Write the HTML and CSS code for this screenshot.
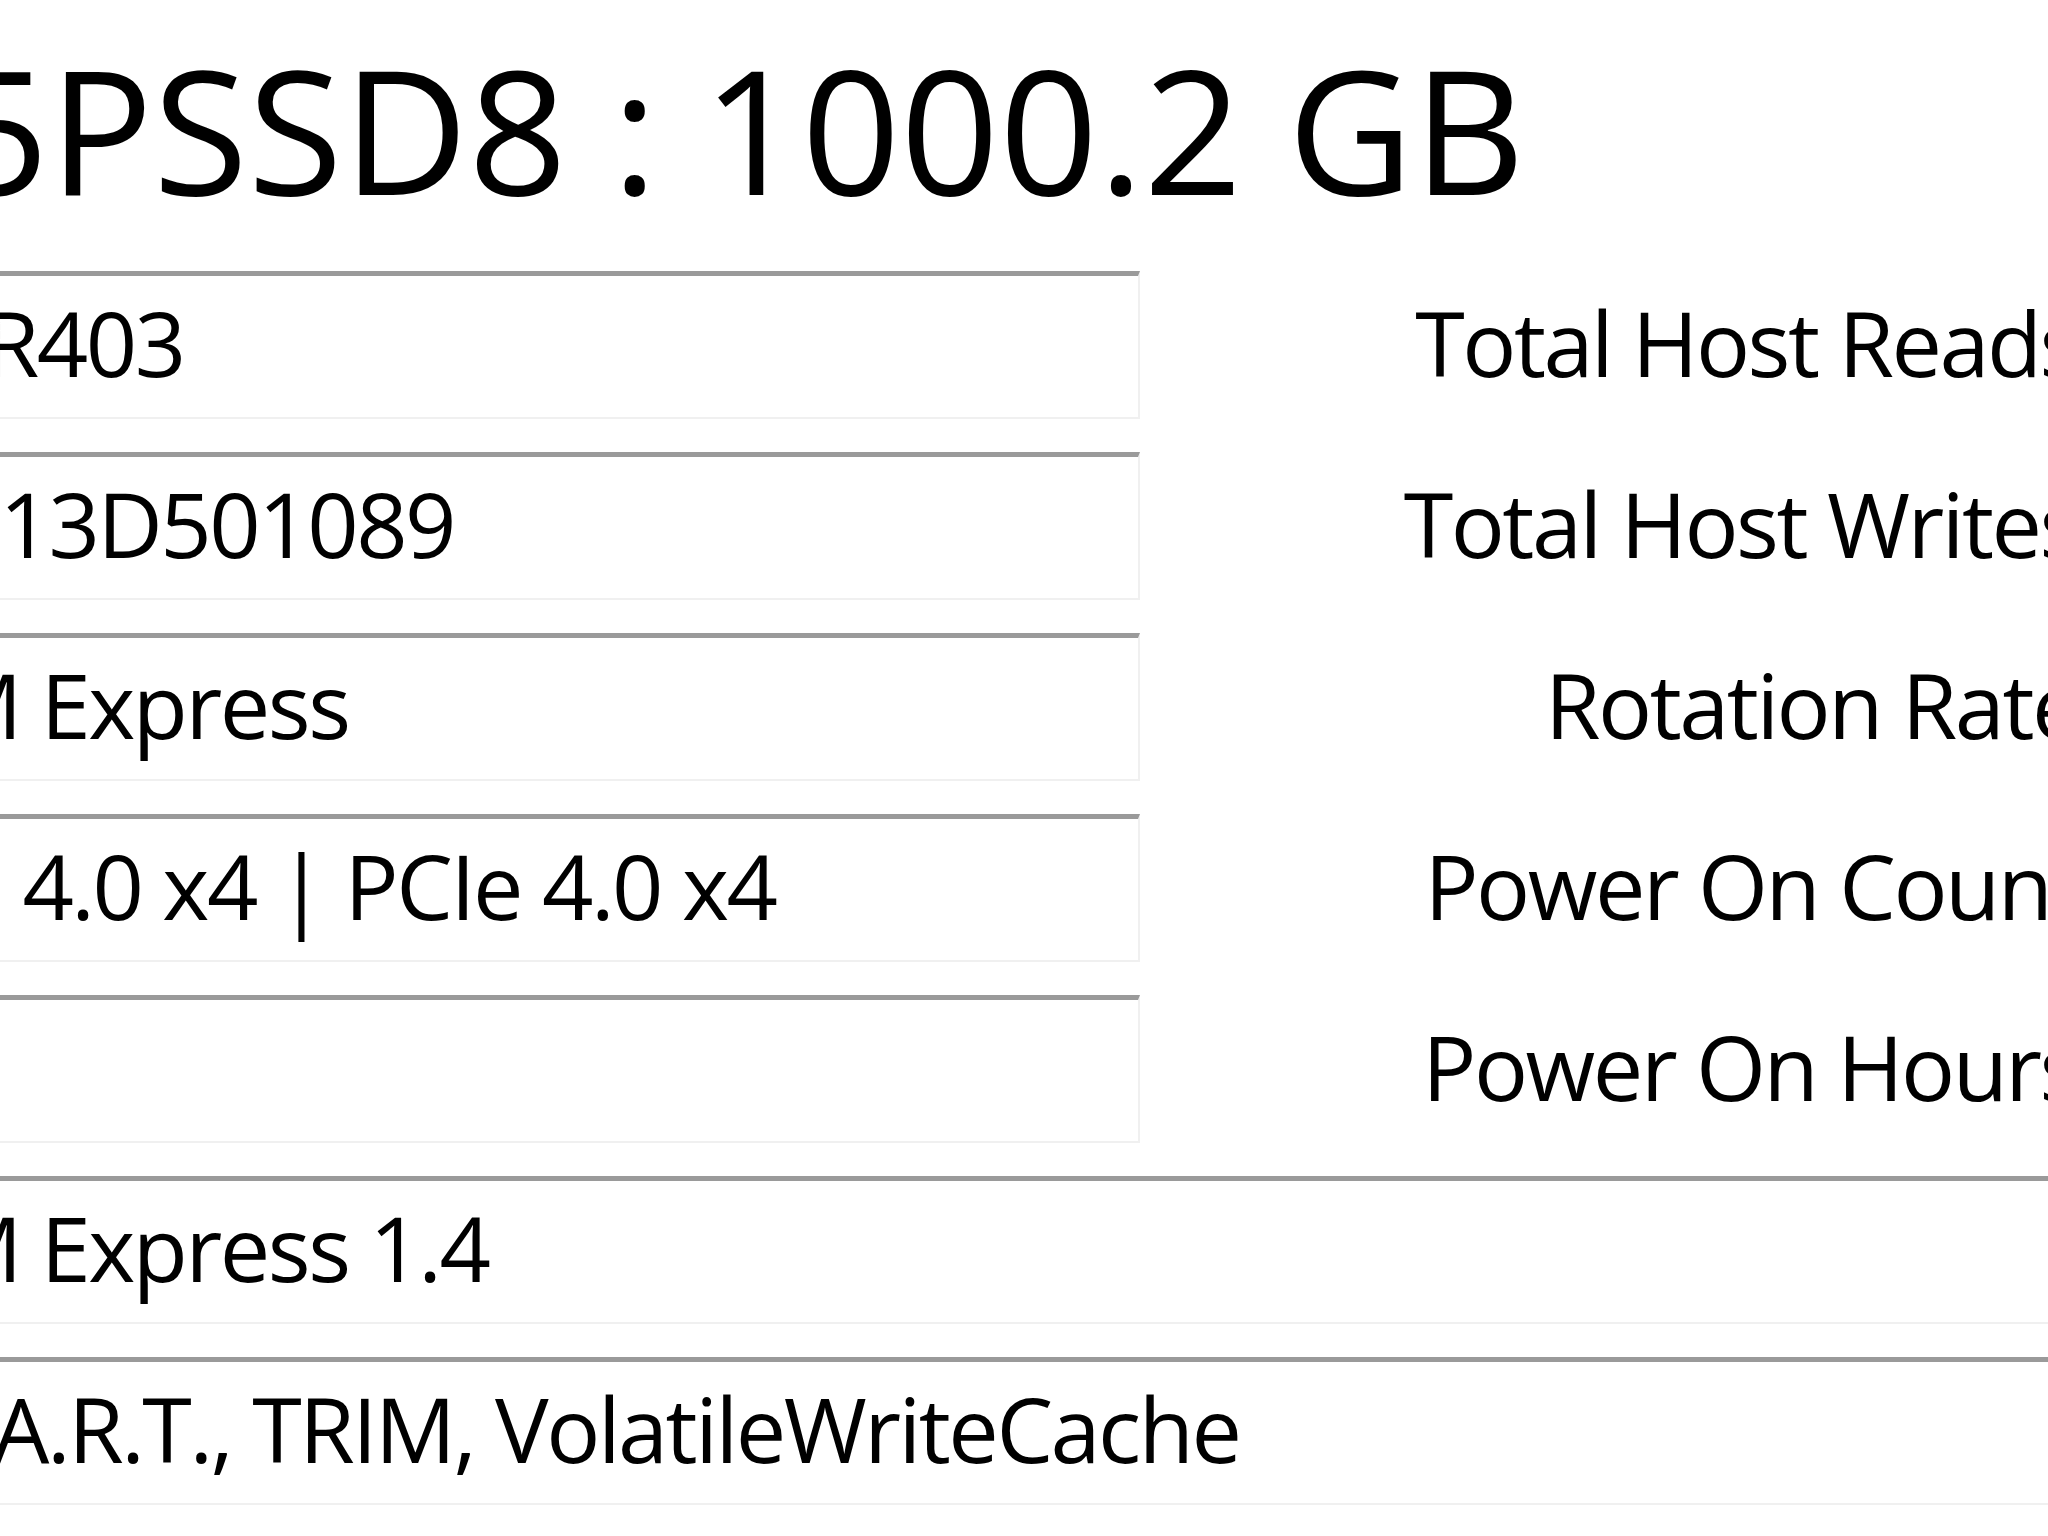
FILE: index.html
```html
<!DOCTYPE html>
<html lang="en">
  <head>
    <meta charset="UTF-8" />
    <meta name="viewport" content="width=device-width, initial-scale=1.0" />
    <title>Disk Info</title>
    <link rel="stylesheet" href="styles.css">
  </head>
  <body>
    <main class="window">
      <!-- Drive title -->
      <h1 class="model">5PSSD8 : 1000.2 GB</h1>

      <!-- Drive details -->
      <section class="info">
        <div class="field">3BCR403</div>
        <div class="label">Total Host Reads</div>
        <div class="field">2410 GB</div>

        <div class="field">5DD13D501089</div>
        <div class="label">Total Host Writes</div>
        <div class="field">3021 GB</div>

        <div class="field">NVM Express</div>
        <div class="label">Rotation Rate</div>
        <div class="field">---- (SSD)</div>

        <div class="field">PCIe 4.0 x4 | PCIe 4.0 x4</div>
        <div class="label">Power On Count</div>
        <div class="field">88 count</div>

        <div class="field"></div>
        <div class="label">Power On Hours</div>
        <div class="field">120 hours</div>

        <div class="field wide">NVM Express 1.4</div>
        <div class="field wide">S.M.A.R.T., TRIM, VolatileWriteCache</div>
      </section>
    </main>
  </body>
</html>
```

FILE: styles.css
```css
* {
  box-sizing: border-box;
}

body {
  margin: 0;
  background-color: #ffffff;
  color: #000000;
  font-family: 'Open Sans', 'Noto Sans', sans-serif;
  overflow: hidden;
}

.window {
  width: 2048px;
  height: 1536px;
  overflow: hidden;
}

.model {
  margin: 41px 0 0 -50px;
  font-size: 173px;
  font-weight: 400;
  line-height: 175px;
  white-space: nowrap;
}

.info {
  display: grid;
  grid-template-columns: 1330px 940px 600px;
  row-gap: 33px;
  margin: 55px 0 0 -190px;
}

.field {
  height: 148px;
  padding: 21px 0 0 13px;
  border-top: 5px solid #9a9a9a;
  border-right: 2px solid #f0f0f0;
  border-bottom: 2px solid #f0f0f0;
  border-left: 2px solid #f0f0f0;
  font-size: 90px;
  line-height: 90px;
  letter-spacing: -2.5px;
  white-space: nowrap;
  overflow: hidden;
}

.label {
  padding-top: 26px;
  text-align: right;
  font-size: 90px;
  line-height: 90px;
  letter-spacing: -2.5px;
  white-space: nowrap;
}

.wide {
  grid-column: 1 / -1;
}
```
